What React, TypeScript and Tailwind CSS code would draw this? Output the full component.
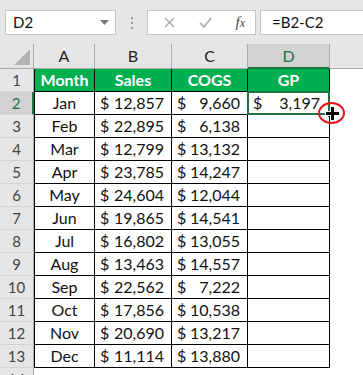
import React from 'react';

const rows = [
  ['Jan', '12,857', '9,660', '3,197'],
  ['Feb', '22,895', '6,138', ''],
  ['Mar', '12,799', '13,132', ''],
  ['Apr', '23,785', '14,247', ''],
  ['May', '24,604', '12,044', ''],
  ['Jun', '19,865', '14,541', ''],
  ['Jul', '16,802', '13,055', ''],
  ['Aug', '13,463', '14,557', ''],
  ['Sep', '22,562', '7,222', ''],
  ['Oct', '17,856', '10,538', ''],
  ['Nov', '20,690', '13,217', ''],
  ['Dec', '11,114', '13,880', ''],
];

const Money = ({ value, pr = 'pr-[7px]' }: { value: string; pr?: string }) =>
  value ? (
    <div className={`flex h-full w-full items-center justify-between pl-[5px] ${pr}`}>
      <span>$</span>
      <span>{value}</span>
    </div>
  ) : null;

const RowHead = ({ n, active }: { n: number; active?: boolean }) => (
  <div
    className={`flex w-[34px] shrink-0 items-center justify-center border-b border-b-[#d4d4d4] text-[15px] ${
      active
        ? 'border-r-2 border-r-[#217346] bg-[#d2d2d2] text-[#217346]'
        : 'border-r border-r-[#ababab] bg-[#e6e6e6] text-[#444]'
    }`}
  >
    {n}
  </div>
);

export default function App() {
  return (
    <div
      className="h-[375px] w-[363px] overflow-hidden bg-white text-[16px] text-[#111]"
      style={{ fontFamily: 'Lato, "Open Sans", sans-serif' }}
    >
      {/* formula bar */}
      <div className="flex h-[44px] items-start bg-[#e6e6e6] pt-[10px] text-[15px]">
        <div className="ml-[5px] flex h-[25px] w-[111px] items-center justify-between border border-[#c6c6c6] bg-white pl-[7px] pr-[6px]">
          <span>D2</span>
          <svg width="9" height="5" viewBox="0 0 9 5">
            <path d="M0 0h9L4.5 5z" fill="#7a7a7a" />
          </svg>
        </div>
        <div className="ml-[15px] flex h-[25px] flex-col items-center justify-center gap-[3px]">
          <span className="h-[2px] w-[2px] bg-[#9a9a9a]" />
          <span className="h-[2px] w-[2px] bg-[#9a9a9a]" />
          <span className="h-[2px] w-[2px] bg-[#9a9a9a]" />
        </div>
        <div className="ml-[14px] flex h-[25px] w-[109px] items-center justify-between border border-[#c6c6c6] bg-white pl-[16px] pr-[10px]">
          <svg width="11" height="11" viewBox="0 0 11 11">
            <path d="M1 1l9 9M10 1l-9 9" stroke="#a6a6a6" strokeWidth="1.3" fill="none" />
          </svg>
          <svg width="13" height="11" viewBox="0 0 13 11">
            <path d="M1 6l4 4 7-9" stroke="#b4b4b4" strokeWidth="2" fill="none" />
          </svg>
          <span
            className="text-[15px] italic text-[#444]"
            style={{ fontFamily: '"Liberation Serif", serif' }}
          >
            f<span className="text-[12px]">x</span>
          </span>
        </div>
        <div className="ml-[4px] flex h-[25px] flex-1 items-center border border-r-0 border-[#c6c6c6] bg-white pl-[11px]">
          =B2-C2
        </div>
      </div>

      {/* column headers */}
      <div className="flex h-[25px] bg-[#e6e6e6] text-[#222]">
        <div className="relative w-[34px] shrink-0 border-r border-b border-[#ababab]">
          <svg className="absolute bottom-[3px] right-[3px]" width="16" height="16" viewBox="0 0 16 16">
            <path d="M16 0V16H0z" fill="#b4b4b4" />
          </svg>
        </div>
        <div className="flex w-[61px] shrink-0 items-center justify-center border-r border-b border-[#ababab]">A</div>
        <div className="flex w-[77px] shrink-0 items-center justify-center border-r border-b border-[#ababab]">B</div>
        <div className="flex w-[76px] shrink-0 items-center justify-center border-r border-b border-[#ababab]">C</div>
        <div className="flex w-[82px] shrink-0 items-center justify-center border-r border-r-[#ababab] border-b-2 border-b-[#217346] bg-[#d2d2d2] text-[#217346]">
          D
        </div>
        <div className="flex-1 border-b border-[#ababab]" />
      </div>

      {/* header row */}
      <div className="flex h-[23px]">
        <RowHead n={1} />
        <div className="flex w-[61px] shrink-0 items-center justify-center border-x border-b border-black bg-[#00b050] font-bold text-white">
          Month
        </div>
        <div className="flex w-[77px] shrink-0 items-center justify-center border-r border-b border-black bg-[#00b050] font-bold text-white">
          Sales
        </div>
        <div className="flex w-[76px] shrink-0 items-center justify-center border-r border-b border-black bg-[#00b050] font-bold text-white">
          COGS
        </div>
        <div className="flex w-[82px] shrink-0 items-center justify-center border-r border-b border-black bg-[#00b050] font-bold text-white">
          GP
        </div>
        <div className="flex-1" />
      </div>

      {rows.map((r, i) => (
        <div key={r[0]} className="flex h-[23px]">
          <RowHead n={i + 2} active={i === 0} />
          <div className="flex w-[61px] shrink-0 items-center justify-center border-x border-b border-black">
            {r[0]}
          </div>
          <div className="w-[77px] shrink-0 border-r border-b border-black">
            <Money value={r[1]} />
          </div>
          <div className="w-[76px] shrink-0 border-r border-b border-black">
            <Money value={r[2]} />
          </div>
          <div className="relative w-[82px] shrink-0 border-r border-b border-black">
            <Money value={r[3]} pr="pr-[9px]" />
            {i === 0 && (
              <>
                <div className="absolute -left-px -top-px h-[24px] w-[83px] border-2 border-[#217346]" />
                <div className="absolute -bottom-[4px] -right-[4px] h-[6px] w-[6px] border border-white bg-[#217346]" />
              </>
            )}
          </div>
          <div className="relative flex-1">
            {i === 0 && (
              <div className="absolute -left-[12px] top-[10px] z-10 h-[22px] w-[27px] rounded-[50%] border-2 border-[#e8141b]">
                <svg className="absolute left-[5px] top-[2px]" width="15" height="15" viewBox="0 0 15 15">
                  <path d="M7.5 0v15M0 7.5h15" stroke="#fff" strokeWidth="5" />
                  <path d="M7.5 1v13M1 7.5h13" stroke="#000" strokeWidth="3" />
                </svg>
              </div>
            )}
          </div>
        </div>
      ))}

      <div className="flex h-[23px]">
        <RowHead n={14} />
        <div className="flex-1" />
      </div>
    </div>
  );
}
